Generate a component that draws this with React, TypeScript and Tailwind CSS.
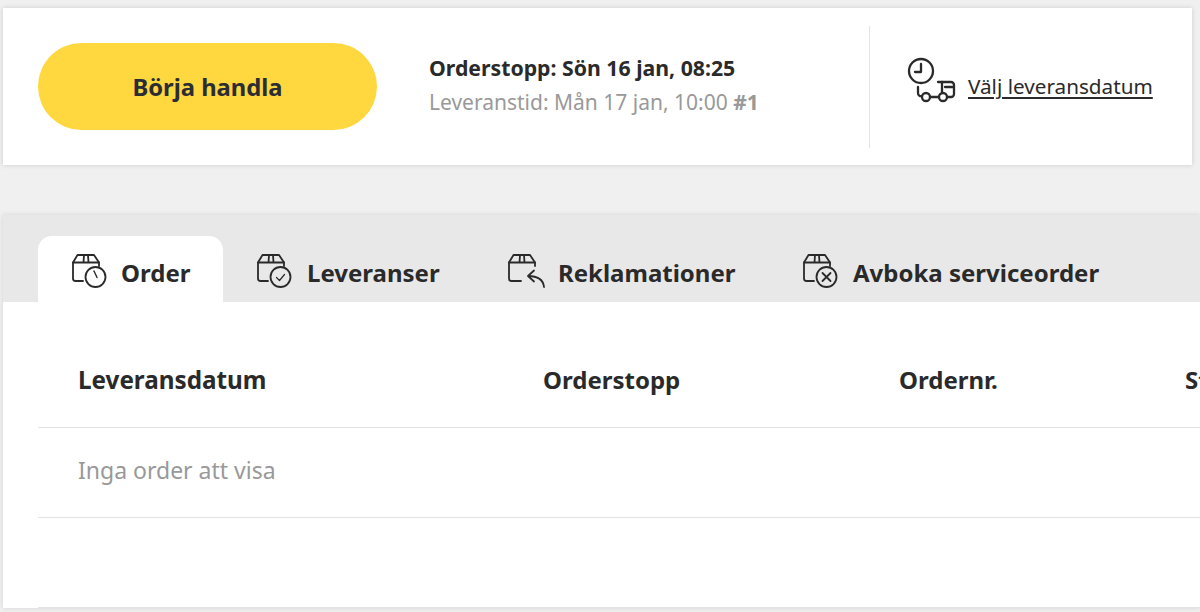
function BoxBase({ tail = 12 }: { tail?: number }) {
  return (
    <>
      <path d={`M${tail} 28H4.5A2.5 2.5 0 0 1 2 25.5V9.5L6.5 2H23l5 7.5V13`} />
      <path d="M2 9.5h26M13 2l-.5 7.5M17 2l.5 7.5" />
    </>
  );
}

function OrderIcon() {
  return (
    <svg className="shrink-0 overflow-visible" width="36" height="36" viewBox="0 0 36 36" fill="none" stroke="#2a2a2a" strokeWidth="1.8" strokeLinecap="round" strokeLinejoin="round">
      <BoxBase />
      <circle cx="24.5" cy="24" r="10" />
      <path d="M23 18l3 6.5" strokeWidth="1.4" />
    </svg>
  );
}

function DeliveryIcon() {
  return (
    <svg className="shrink-0 overflow-visible" width="36" height="36" viewBox="0 0 36 36" fill="none" stroke="#2a2a2a" strokeWidth="1.8" strokeLinecap="round" strokeLinejoin="round">
      <BoxBase />
      <circle cx="24.5" cy="24" r="10" />
      <path d="M20.5 24.5l3 3 5-6" strokeWidth="1.2" />
    </svg>
  );
}

function ReturnIcon() {
  return (
    <svg className="shrink-0 overflow-visible" width="36" height="36" viewBox="0 0 36 36" fill="none" stroke="#2a2a2a" strokeWidth="1.8" strokeLinecap="round" strokeLinejoin="round">
      <BoxBase tail={14} />
      <path d="M27 17.5L21 23l6 5.5M21 23c8 0 15 2 16 11" />
    </svg>
  );
}

function CancelIcon() {
  return (
    <svg className="shrink-0 overflow-visible" width="36" height="36" viewBox="0 0 36 36" fill="none" stroke="#2a2a2a" strokeWidth="1.8" strokeLinecap="round" strokeLinejoin="round">
      <BoxBase />
      <circle cx="24.5" cy="24" r="10" />
      <path d="M20.5 20l8 8M28.5 20l-8 8" />
    </svg>
  );
}

function TruckClockIcon() {
  return (
    <svg className="mb-[13px] shrink-0" width="50" height="46" viewBox="0 0 50 46" fill="none" stroke="#2a2a2a" strokeWidth="2.3" strokeLinecap="round" strokeLinejoin="round">
      <circle cx="14" cy="14" r="12" />
      <path d="M14 7v8H8" />
      <path d="M11 30v6a3 3 0 0 0 4 3" />
      <circle cx="19" cy="40" r="4" />
      <circle cx="36" cy="40" r="4" />
      <path d="M23 40h9M31 25h4v11" />
      <path d="M35 25h9a3 3 0 0 1 3 3v9a3 3 0 0 1-3 3h-4M38 30h9" />
    </svg>
  );
}

const tabs = [
  { label: "Order", icon: <OrderIcon />, box: "w-[185px] gap-[14px] bg-white rounded-t-[14px]" },
  { label: "Leveranser", icon: <DeliveryIcon />, box: "w-[251px] gap-[15px]" },
  { label: "Reklamationer", icon: <ReturnIcon />, box: "w-[295px] gap-[15px]" },
  { label: "Avboka serviceorder", icon: <CancelIcon />, box: "w-[340px] gap-[15px]" },
];

export default function App() {
  return (
    <div className="h-[612px] w-[1200px] overflow-hidden bg-[#f0f0f0] pt-[8px] text-[#2a2a2a] font-['Noto_Sans',sans-serif]">
      <div className="ml-[3px] flex h-[157px] w-[1189px] items-center bg-white shadow-[0_0_5px_rgba(0,0,0,0.15)]">
        <button className="ml-[35px] h-[87px] w-[339px] rounded-full bg-[#ffd73f] pt-[2px] text-[23.75px] font-bold text-[#2a2d34]">
          Börja handla
        </button>
        <div className="ml-[52px] w-[440px] pb-[4px]">
          <p className="text-[21.25px] leading-[34px] font-bold">Orderstopp: Sön 16 jan, 08:25</p>
          <p className="text-[21px] leading-[34px] text-[#999999]">
            Leveranstid: Mån 17 jan, 10:00 <span className="font-bold">#1</span>
          </p>
        </div>
        <div className="h-[122px] w-px bg-[#e3e3e3]" />
        <div className="ml-[37px] flex items-center">
          <TruckClockIcon />
          <a className="ml-[11px] text-[20.7px] underline underline-offset-[3px]">Välj leveransdatum</a>
        </div>
      </div>

      <div className="ml-[3px] mt-[50px] bg-white shadow-[0_0_5px_rgba(0,0,0,0.12)]">
        <div className="flex h-[87px] items-end bg-[#e8e8e8] pl-[35px]">
          {tabs.map((tab) => (
            <div key={tab.label} className={`flex h-[66px] shrink-0 items-center pt-[4px] pl-[33px] ${tab.box}`}>
              {tab.icon}
              <span className="pt-[4px] text-[24px] font-bold whitespace-nowrap">{tab.label}</span>
            </div>
          ))}
        </div>
        <div className="pl-[35px]">
          <div className="flex h-[126px] items-center border-b border-[#e3e3e3] pt-[31px] pl-[40px] text-[24px] font-bold whitespace-nowrap">
            <span className="w-[465px] shrink-0 text-[24.25px]">Leveransdatum</span>
            <span className="w-[356px] shrink-0">Orderstopp</span>
            <span className="w-[286px] shrink-0">Ordernr.</span>
            <span>Status</span>
          </div>
          <div className="flex h-[90px] items-center border-b border-[#e3e3e3] pb-[4px] pl-[40px] text-[23px] text-[#999999]">
            Inga order att visa
          </div>
          <div className="h-[90px] border-b border-[#e3e3e3]" />
        </div>
      </div>
    </div>
  );
}
